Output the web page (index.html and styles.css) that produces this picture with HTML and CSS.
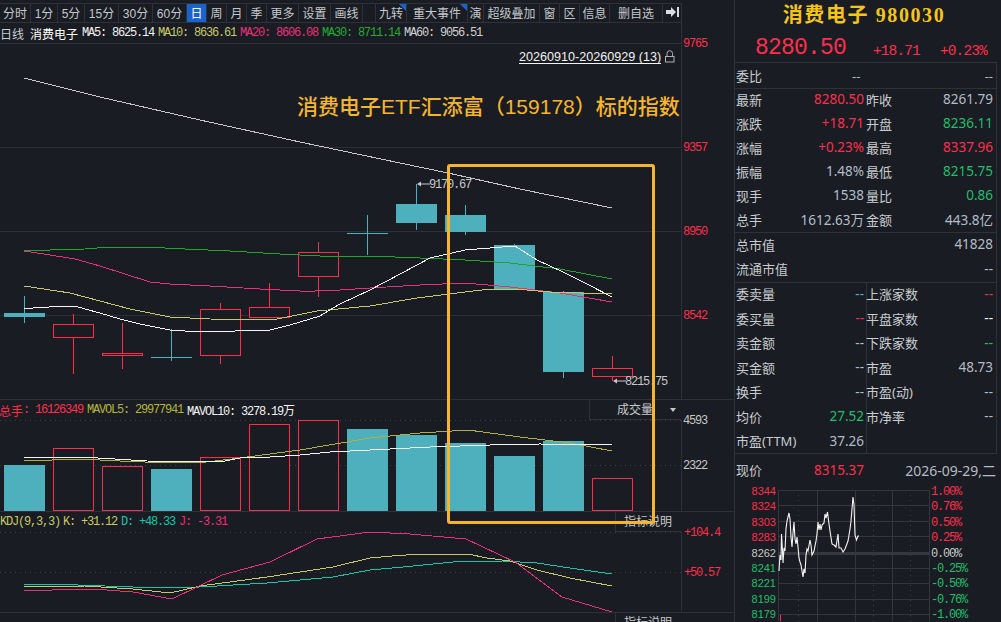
FILE: index.html
```html
<!DOCTYPE html>
<html lang="zh-CN">
<head>
  <meta charset="UTF-8">
  <title>消费电子 980030</title>
  <link rel="stylesheet" href="styles.css">
</head>
<body>
  <div class="page">
    <div class="chart-col">
      <div class="toolbar">
        <div class="tool w31">分时</div>
        <div class="tool w27">1分</div>
        <div class="tool w27">5分</div>
        <div class="tool w34">15分</div>
        <div class="tool w34">30分</div>
        <div class="tool w34">60分</div>
        <div class="tool w20 active">日</div>
        <div class="tool w20">周</div>
        <div class="tool w20">月</div>
        <div class="tool w20">季</div>
        <div class="tool w32">更多</div>
        <div class="tool w32">设置</div>
        <div class="tool w32">画线</div>
        <div class="tool w13"></div>
        <div class="tool w31 flag">九转</div>
        <div class="tool w61 flag">重大事件</div>
        <div class="tool w16">演</div>
        <div class="tool w56">超级叠加</div>
        <div class="tool w20">窗</div>
        <div class="tool w20">区</div>
        <div class="tool w30">信息</div>
        <div class="tool w53">删自选</div>
        <div class="tool w19">
          <svg width="13" height="10" viewBox="0 0 13 10"><path d="M0 3h5V0l5 5-5 5V7H0z" fill="#ddd"/><rect x="11" y="0" width="2" height="10" fill="#ddd"/></svg>
        </div>
      </div>

      <div class="legend legend-main">
        <span class="cn">日线</span>
        <span class="cn name">消费电子</span>
        <span class="mono c-white ma">MA5: 8625.14</span>
        <span class="mono c-yellow ma">MA10: 8636.61</span>
        <span class="mono c-pink ma">MA20: 8606.08</span>
        <span class="mono c-green ma">MA30: 8711.14</span>
        <span class="mono c-grey ma">MA60: 9056.51</span>
      </div>

      <!-- all chart svgs use page coordinates in the viewBox -->
      <svg class="plot" width="734" height="355" viewBox="0 44 734 355">
        <g class="grid">
          <line x1="0" x2="682" y1="147.5" y2="147.5"/>
          <line x1="0" x2="682" y1="231.5" y2="231.5"/>
          <line x1="0" x2="682" y1="315.5" y2="315.5"/>
          <line x1="681.5" x2="681.5" y1="44" y2="399"/>
        </g>
        <g class="axis-red">
          <text x="683" y="47">9765</text>
          <text x="683" y="151">9357</text>
          <text x="683" y="235">8950</text>
          <text x="683" y="319">8542</text>
        </g>

        <g class="teal">
          <rect x="4" y="313" width="41" height="4"/>
          <rect x="24" y="296" width="1" height="27"/>
          <rect x="151" y="357" width="41" height="1"/>
          <rect x="171" y="329" width="1" height="32"/>
          <rect x="347" y="233" width="41" height="1"/>
          <rect x="367" y="215" width="1" height="40"/>
          <rect x="416" y="184" width="1" height="46"/>
          <rect x="396" y="204" width="41" height="19"/>
          <rect x="465" y="205" width="1" height="30"/>
          <rect x="445" y="215" width="41" height="17"/>
          <rect x="514" y="244" width="1" height="10"/>
          <rect x="494" y="245" width="41" height="44"/>
          <rect x="563" y="291" width="1" height="87"/>
          <rect x="543" y="292" width="41" height="80"/>
        </g>
        <g class="red-wick">
          <line x1="73.5" x2="73.5" y1="314" y2="324"/><line x1="73.5" x2="73.5" y1="338" y2="374"/>
          <line x1="122.5" x2="122.5" y1="323" y2="353"/><line x1="122.5" x2="122.5" y1="356" y2="369"/>
          <line x1="220.5" x2="220.5" y1="303" y2="309"/><line x1="220.5" x2="220.5" y1="356" y2="364"/>
          <line x1="269.5" x2="269.5" y1="283" y2="307"/>
          <line x1="318.5" x2="318.5" y1="242" y2="252"/><line x1="318.5" x2="318.5" y1="277" y2="297"/>
          <line x1="612.5" x2="612.5" y1="356" y2="368"/><line x1="612.5" x2="612.5" y1="377" y2="381"/>
        </g>
        <g class="red-box">
          <rect x="53.5" y="324.5" width="40" height="13"/>
          <rect x="102.5" y="353.5" width="40" height="2"/>
          <rect x="200.5" y="309.5" width="40" height="46"/>
          <rect x="249.5" y="307.5" width="40" height="10"/>
          <rect x="298.5" y="252.5" width="40" height="24"/>
          <rect x="592.5" y="368.5" width="40" height="8"/>
        </g>

        <g class="lines">
          <polyline class="l-grey" points="24,78 100,97 200,120 300,142 400,163 448,173 520,189 612,208"/>
          <polyline class="l-green" points="24,250 50,250 85,249 110,247 145,247 185,249 230,251 280,254 320,256 370,256 420,258 465,260 510,263 560,269 612,279"/>
          <polyline class="l-pink" points="24,251 50,255 75,259 100,266 125,274 150,282 170,284 210,286 260,289 300,291 315,291 340,290 370,288 420,285 465,283 510,287 560,293 612,302"/>
          <polyline class="l-yellow" points="24,286 70,293 100,301 130,309 170,317 210,319 247,320 277,319 317,311 370,306 417,298 465,292 490,289 515,289 550,292 612,294"/>
          <polyline class="l-white" points="24,309 33,308 49,307 65,306 75,306 85,309 100,313 120,319 140,324 160,328 170,330 185,331 208,332 235,331 270,330 290,325 320,316 340,304 370,290 417,265 430,258 465,250 490,248 515,246 537,260 563,272 587,284 612,297"/>
        </g>

        <path class="arrow" d="M417 184l4-2.5v2h9v1h-9v2z"/>
        <text class="mono-text" x="429" y="188">9170.67</text>
        <path class="arrow" d="M613 381l4-2.5v2h9v1h-9v2z"/>
        <text class="mono-text" x="625" y="385">8215.75</text>

        <text class="note" x="297" y="114">消费电子ETF汇添富（159178）标的指数</text>
        <text class="range" x="519" y="61">20260910-20260929 (13)</text>
        <line class="range-line" x1="519" x2="661" y1="63.5" y2="63.5"/>
        <g class="lock">
          <path d="M667 56v-2.5a2.8 2.8 0 0 1 5.6 0V56"/>
          <rect x="665.5" y="56.5" width="8.5" height="5.5"/>
        </g>
      </svg>

      <div class="legend legend-sub">
        <span class="c-red cn clip">总手</span>
        <span class="mono c-red">: 16126349</span>
        <span class="mono c-olive ma">MAVOL5: 29977941</span>
        <span class="mono c-white ma">MAVOL10: 3278.19<span class="cn">万</span></span>
        <div class="drop-box">成交量<i class="caret"></i></div>
      </div>
      <svg class="plot" width="734" height="91" viewBox="0 420 734 91">
        <g class="grid">
          <line class="dot" x1="0" x2="682" y1="420.5" y2="420.5"/>
          <line class="dot" x1="0" x2="682" y1="465.5" y2="465.5"/>
          <line x1="681.5" x2="681.5" y1="420" y2="511"/>
        </g>
        <g class="axis-grey">
          <text x="683" y="424">4593</text>
          <text x="683" y="469">2322</text>
        </g>
        <g class="teal">
          <rect x="4" y="465" width="41" height="46"/>
          <rect x="151" y="469" width="41" height="42"/>
          <rect x="347" y="429" width="41" height="82"/>
          <rect x="396" y="435" width="41" height="76"/>
          <rect x="445" y="443" width="41" height="68"/>
          <rect x="494" y="456" width="41" height="55"/>
          <rect x="543" y="441" width="41" height="70"/>
        </g>
        <g class="red-box">
          <rect x="53.5" y="448.5" width="40" height="62"/>
          <rect x="102.5" y="466.5" width="40" height="44"/>
          <rect x="200.5" y="457.5" width="40" height="53"/>
          <rect x="249.5" y="424.5" width="40" height="86"/>
          <rect x="298.5" y="420.5" width="40" height="90"/>
          <rect x="592.5" y="478.5" width="40" height="32"/>
        </g>
        <g class="lines">
          <polyline class="l-olive" points="24,461 80,459 120,461 170,463 207,462 240,458 300,450 370,438 420,433 468,430 520,437 570,443 612,451"/>
          <polyline class="l-white" points="24,457 80,457 115,459 147,461 200,462 225,461 240,458 270,457 300,455 330,452 370,450 430,447 490,445 540,444 612,445"/>
        </g>
      </svg>

      <div class="legend legend-sub">
        <span class="mono c-yellow">KDJ(9,3,3)</span>
        <span class="mono c-yellow gap3">K: +31.12</span>
        <span class="mono c-teal ma">D: +48.33</span>
        <span class="mono c-pink ma">J: -3.31</span>
        <div class="help-box">指标说明</div>
      </div>
      <svg class="plot" width="734" height="80" viewBox="0 532 734 80">
        <g class="grid">
          <line class="dot" x1="0" x2="682" y1="532.5" y2="532.5"/>
          <line class="dot" x1="0" x2="682" y1="572.5" y2="572.5"/>
          <line x1="681.5" x2="681.5" y1="532" y2="612"/>
        </g>
        <g class="axis-red">
          <text x="684" y="536">+104.4</text>
          <text x="684" y="576">+50.57</text>
        </g>
        <g class="lines">
          <polyline class="l-teal" points="24,584 50,584 133,587 160,588 200,587 267,583 333,577 370,570 403,567 453,562 503,561 537,563 570,568 612,574"/>
          <polyline class="l-yellow" points="24,587 85,586 133,589 170,593 183,590 200,586 267,577 333,567 370,558 392,556 420,554 468,554 487,558 510,561 537,570 570,578 612,586"/>
          <polyline class="l-pink" points="24,591 80,589 107,590 133,592 172,599 222,575 270,562 317,539 370,532 410,534 466,539 515,562 562,597 612,612"/>
        </g>
      </svg>

      <div class="legend legend-last">
        <span class="mono c-grey">MACD(12,26,9)</span>
        <span class="mono c-lime gap2">MACD: -2.26</span>
        <span class="mono c-white ma">DIFF: -111.8</span>
        <span class="mono c-yellow ma">DEA: -110.7</span>
        <div class="help-box">指标说明</div>
      </div>

      <div class="highlight"></div>
    </div>

    <div class="quote">
      <div class="q-title">消费电子 980030</div>
      <div class="q-price">
        <span class="big-price">8280.50</span>
        <span class="q-change">+18.71</span>
        <span class="q-change">+0.23%</span>
      </div>
      <div class="q-section q-bid">
        <div class="cell"><span>委比</span><span class="dash">--</span><span class="dash">--</span></div>
      </div>
      <div class="q-section q-grid r24">
        <div class="cell"><span>最新</span><b class="up">8280.50</b></div>
        <div class="cell"><span>昨收</span><b>8261.79</b></div>
        <div class="cell"><span>涨跌</span><b class="up">+18.71</b></div>
        <div class="cell"><span>开盘</span><b class="down">8236.11</b></div>
        <div class="cell"><span>涨幅</span><b class="up">+0.23%</b></div>
        <div class="cell"><span>最高</span><b class="up">8337.96</b></div>
        <div class="cell"><span>振幅</span><b>1.48%</b></div>
        <div class="cell"><span>最低</span><b class="down">8215.75</b></div>
        <div class="cell"><span>现手</span><b>1538</b></div>
        <div class="cell"><span>量比</span><b class="down">0.86</b></div>
        <div class="cell"><span>总手</span><b>1612.63万</b></div>
        <div class="cell"><span>金额</span><b>443.8亿</b></div>
      </div>
      <div class="q-section q-cap">
        <div class="cell"><span>总市值</span><b>41828</b></div>
        <div class="cell"><span>流通市值</span><b>--</b></div>
      </div>
      <div class="q-section q-grid r245 split">
        <div class="cell"><span>委卖量</span><b class="teal-txt">--</b></div>
        <div class="cell"><span>上涨家数</span><b class="up">--</b></div>
        <div class="cell"><span>委买量</span><b class="up">--</b></div>
        <div class="cell"><span>平盘家数</span><b class="white">--</b></div>
        <div class="cell"><span>卖金额</span><b>--</b></div>
        <div class="cell"><span>下跌家数</span><b class="down">--</b></div>
        <div class="cell"><span>买金额</span><b>--</b></div>
        <div class="cell"><span>市盈</span><b>48.73</b></div>
        <div class="cell"><span>换手</span><b>--</b></div>
        <div class="cell"><span>市盈(动)</span><b>--</b></div>
        <div class="cell"><span>均价</span><b class="down">27.52</b></div>
        <div class="cell"><span>市净率</span><b>--</b></div>
        <div class="cell"><span>市盈(TTM)</span><b>37.26</b></div>
        <div class="cell"></div>
      </div>
      <div class="q-now">
        <span>现价</span>
        <b class="up now-price">8315.37</b>
        <b class="now-date">2026-09-29,二</b>
      </div>
      <svg class="plot" width="261" height="134" viewBox="735 488 261 134">
        <g class="grid spark-grid">
          <line x1="778" x2="929" y1="491.5" y2="491.5"/>
          <line x1="778" x2="929" y1="506.5" y2="506.5"/>
          <line x1="778" x2="929" y1="522.5" y2="522.5"/>
          <line x1="778" x2="929" y1="537.5" y2="537.5"/>
          <line x1="778" x2="929" y1="569.5" y2="569.5"/>
          <line x1="778" x2="929" y1="584.5" y2="584.5"/>
          <line x1="778" x2="929" y1="600.5" y2="600.5"/>
          <line x1="778" x2="929" y1="615.5" y2="615.5"/>
          <line x1="778.5" x2="778.5" y1="491" y2="622"/>
          <line x1="817.5" x2="817.5" y1="491" y2="622"/>
          <line x1="855.5" x2="855.5" y1="491" y2="622"/>
          <line x1="892.5" x2="892.5" y1="491" y2="622"/>
          <line x1="929.5" x2="929.5" y1="491" y2="622"/>
          <line class="dot" x1="798.5" x2="798.5" y1="491" y2="622"/>
          <line class="dot" x1="873.5" x2="873.5" y1="491" y2="622"/>
          <line class="dot" x1="910.5" x2="910.5" y1="491" y2="622"/>
          <line class="zero" x1="778" x2="929" y1="554" y2="554"/>
        </g>
        <g class="spark-left">
          <text class="s-up" x="776" y="496">8344</text>
          <text class="s-up" x="776" y="511">8324</text>
          <text class="s-up" x="776" y="527">8303</text>
          <text class="s-up" x="776" y="542">8283</text>
          <text class="s-flat" x="776" y="558">8262</text>
          <text class="s-down" x="776" y="573">8241</text>
          <text class="s-down" x="776" y="588">8221</text>
          <text class="s-down" x="776" y="604">8199</text>
          <text class="s-down" x="776" y="619">8179</text>
        </g>
        <g class="spark-right">
          <text class="s-up" x="931" y="496">1.00%</text>
          <text class="s-up" x="931" y="511">0.76%</text>
          <text class="s-up" x="931" y="527">0.50%</text>
          <text class="s-up" x="931" y="542">0.25%</text>
          <text class="s-flat" x="931" y="558">0.00%</text>
          <text class="s-down" x="931" y="573">-0.25%</text>
          <text class="s-down" x="931" y="588">-0.50%</text>
          <text class="s-down" x="931" y="604">-0.76%</text>
          <text class="s-down" x="931" y="619">-1.00%</text>
        </g>
        <polyline class="spark" points="779,572 780,556 781,561 781.5,535 782.5,552 783,564 784,549 785,552 786,530 787,522 788,518 789,514 790,520 791,538 792,548 793,534 794,523 795,540 796,545 797,538 798,548 799,559 800,563 801,566 802,572 803,578 804,570 805,574 806,556 807,550 808,552 810,541 811,546 812,556 814,552 816,542 817,535 818,523 819,531 820,525 821,531 822,526 824,524 825,515 826,519 827.5,513 829,525 830,532 832,545 834,546 836,548 838,535 839,549 841,549 843,553 845,550 848,542 850,530 851,522 853,498 854,506 855,536 856.5,541 858,537 859,537"/>
        <line class="tick" x1="780.5" x2="780.5" y1="616" y2="622"/>
      </svg>
    </div>
  </div>
</body>
</html>
```

FILE: styles.css
```css
html, body {
  margin: 0;
  padding: 0;
  height: 622px;
  overflow: hidden;
  background: #191c22;
}
.page {
  display: flex;
  width: 1001px;
  height: 622px;
  font-family: "Noto Sans", "Noto Sans CJK SC", sans-serif;
  color: #c8ccd0;
}
.chart-col {
  position: relative;
  width: 734px;
  flex: none;
}
.plot {
  display: block;
  overflow: visible;
}

/* toolbar */
.toolbar {
  display: flex;
  width: 682px;
  height: 18px;
  margin-top: 3px;
  border-top: 1px solid #2e3135;
  border-bottom: 1px solid #2e3135;
}
.tool {
  position: relative;
  display: flex;
  align-items: center;
  justify-content: center;
  box-sizing: border-box;
  flex: none;
  height: 18px;
  padding-bottom: 2px;
  border-right: 1px solid #2e3135;
  font-family: "Liberation Sans", "Noto Sans CJK SC", sans-serif;
  font-size: 12px;
  color: #c4c8cc;
  white-space: nowrap;
}
.tool.active {
  background: #1b63cc;
  color: #fff;
}
.flag::after {
  content: "";
  position: absolute;
  top: 0;
  right: 0;
  border-top: 7px solid #1b63cc;
  border-left: 7px solid transparent;
}
.w13 { width: 13px; }
.w16 { width: 16px; }
.w19 { width: 19px; }
.w20 { width: 20px; }
.w27 { width: 27px; }
.w30 { width: 30px; }
.w31 { width: 31px; }
.w32 { width: 32px; }
.w34 { width: 34px; }
.w53 { width: 53px; }
.w56 { width: 56px; }
.w61 { width: 61px; }

/* legends */
.legend {
  position: relative;
  display: flex;
  align-items: center;
  box-sizing: border-box;
  white-space: pre;
  font-size: 12px;
}
.legend-main {
  width: 682px;
  height: 21px;
  border-bottom: 1px solid #2e3135;
  border-right: 1px solid #2e3135;
}
.legend-sub {
  width: 734px;
  height: 21px;
  border-top: 1px solid #2e3135;
}
.legend-last {
  width: 734px;
  height: 18px;
  border-top: 1px solid #2e3135;
  padding-top: 12px;
}
.cn {
  font-family: "Noto Sans CJK SC", sans-serif;
  font-size: 12px;
}
.name {
  margin-left: 6px;
  color: #fff;
}
.clip { margin-left: -1px; }
.mono {
  font-family: "Liberation Mono", monospace;
  font-size: 12px;
  letter-spacing: -1.2px;
}
.mono .cn { letter-spacing: 0; }
.ma { margin-left: 4px; }
.gap3 { margin-left: 3px; }
.gap2 { margin-left: 2px; }
.c-white { color: #f2f2f2; }
.c-grey { color: #d0d0d0; }
.c-yellow { color: #c8c86a; }
.c-olive { color: #b4b43c; }
.c-pink { color: #e8307a; }
.c-green { color: #22aa33; }
.c-red { color: #ff2e4c; }
.c-teal { color: #10c8aa; }
.c-lime { color: #1fbf6c; }
.drop-box, .help-box {
  position: absolute;
  top: 0;
  right: 53px;
  height: 20px;
  box-sizing: border-box;
  border-left: 1px solid #2e3135;
  border-bottom: 1px solid #2e3135;
  font-family: "Noto Sans CJK SC", sans-serif;
  font-size: 12px;
  color: #c8c8c8;
  line-height: 18px;
}
.drop-box {
  width: 92px;
  padding-left: 27px;
}
.help-box {
  width: 66px;
  padding-left: 8px;
}
.legend-last .help-box { height: 18px; }
.caret {
  position: absolute;
  right: 5px;
  top: 8px;
  border-top: 4px solid #c8c8c8;
  border-left: 3px solid transparent;
  border-right: 3px solid transparent;
}

/* chart marks */
.grid line {
  stroke: #2c2f34;
  stroke-width: 1;
  shape-rendering: crispEdges;
}
.grid .dot {
  stroke: #3a3d42;
  stroke-dasharray: 1 4;
}
.grid .zero {
  stroke: #35383c;
  stroke-width: 3;
}
.spark-grid line { stroke: #33363c; }
.teal rect {
  fill: #4db0bc;
  shape-rendering: crispEdges;
}
.red-box rect {
  fill: #191c22;
  stroke: #ff2e4c;
  stroke-width: 1;
}
.red-wick line {
  stroke: #ff2e4c;
  stroke-width: 1;
}
.lines polyline {
  fill: none;
  stroke-width: 1;
  shape-rendering: crispEdges;
}
.l-white { stroke: #f4f4f4; }
.l-grey { stroke: #c8c8c8; }
.l-green { stroke: #1fa52c; }
.l-pink { stroke: #e8307a; }
.l-yellow { stroke: #c8c86a; }
.l-olive { stroke: #b0b03a; }
.l-teal { stroke: #10c8aa; }
.axis-red text, .axis-grey text, .mono-text {
  font-family: "Liberation Mono", monospace;
  font-size: 12px;
  letter-spacing: -1.2px;
}
.axis-red text { fill: #ff2e4c; }
.axis-grey text { fill: #c8c8c8; }
.mono-text { fill: #c8c8c8; }
.arrow { fill: #c8c8c8; }
.note {
  font-family: "Liberation Sans", "Noto Sans CJK SC", sans-serif;
  font-size: 21px;
  font-weight: 500;
  fill: #f5b52e;
}
.range {
  font-family: "Liberation Sans", sans-serif;
  font-size: 12.6px;
  fill: #f2f2f2;
}
.range-line {
  stroke: #f2f2f2;
  stroke-width: 1;
  shape-rendering: crispEdges;
}
.lock path, .lock rect {
  fill: none;
  stroke: #b0b0b0;
  stroke-width: 1;
}
.highlight {
  position: absolute;
  left: 447px;
  top: 164px;
  width: 208px;
  height: 360px;
  box-sizing: border-box;
  border: 3px solid #f5b52e;
  border-radius: 3px;
}

/* quote panel */
.quote {
  box-sizing: border-box;
  width: 263px;
  flex: none;
  height: 622px;
  padding-top: 3px;
  border-left: 1px solid #2e3135;
}
.q-title {
  height: 24px;
  width: 258px;
  text-align: center;
  font-family: "Liberation Serif", "Noto Sans CJK SC", serif;
  font-size: 20px;
  font-weight: bold;
  letter-spacing: 1.6px;
  line-height: 24px;
  color: #f5c518;
  white-space: nowrap;
}
.q-price {
  display: flex;
  align-items: center;
  box-sizing: border-box;
  height: 35px;
  padding: 7px 0 0 20px;
  font-family: "Liberation Mono", monospace;
  color: #ff2e4c;
}
.big-price {
  flex: none;
  width: 118px;
  font-size: 23px;
  letter-spacing: -0.8px;
}
.q-change {
  flex: none;
  width: 67px;
  margin-top: 5px;
  font-size: 14.5px;
  letter-spacing: -0.9px;
}
.q-section {
  width: 262px;
  box-sizing: border-box;
  border-top: 1px solid #2e3135;
  border-right: 1px solid #2e3135;
}
.q-bid { height: 26px; }
.q-bid .cell { height: 25px; padding-bottom: 0; }
.q-grid {
  display: grid;
  grid-template-columns: 130px 131px;
}
.r24 { grid-auto-rows: 24px; height: 144px; }
.r245 { grid-auto-rows: 24.5px; height: 172px; }
.q-cap { height: 50px; }
.q-cap .cell { height: 24.5px; }
.split {
  background: linear-gradient(#2e3135, #2e3135) 131px 0 / 1px 100% no-repeat;
  border-bottom: 1px solid #2e3135;
}
.cell {
  display: flex;
  align-items: center;
  justify-content: space-between;
  box-sizing: border-box;
  padding: 0 3px 2px 1px;
  font-size: 13px;
  white-space: nowrap;
}
.r24 .cell { padding-bottom: 4px; }
.r245 .cell { padding-bottom: 3px; }
.q-grid .cell:nth-child(odd) { padding-right: 1px; }
.dash { color: #b4bcc8; }
.cell .dash:nth-child(2) { margin-left: 90px; margin-right: auto; }
.cell b, .q-now b {
  font-weight: normal;
  font-size: 13.5px;
  color: #b4bcc8;
}
.cell b.up, .q-now b.up { color: #ff2e4c; }
.cell b.down { color: #1fbf6c; }
.cell b.white { color: #fff; }
.cell b.teal-txt { color: #4db0bc; }
.q-now {
  display: flex;
  align-items: center;
  width: 261px;
  height: 33px;
  box-sizing: border-box;
  padding: 0 0 2px 1px;
  font-size: 13px;
}
.q-now b.now-price { margin-left: 52px; }
.q-now b.now-date { margin-left: auto; font-size: 14px; }
.spark-left text {
  font-family: "Liberation Sans", sans-serif;
  font-size: 11px;
  text-anchor: end;
}
.spark-right text {
  font-family: "Liberation Mono", monospace;
  font-size: 12px;
  letter-spacing: -1.2px;
}
.s-up { fill: #ff2e4c; }
.s-flat { fill: #c8c8c8; }
.s-down { fill: #1fbf6c; }
.spark {
  fill: none;
  stroke: #f4f4f4;
  stroke-width: 1.1;
}
.tick { stroke: #ff2e4c; stroke-width: 1; }
```
